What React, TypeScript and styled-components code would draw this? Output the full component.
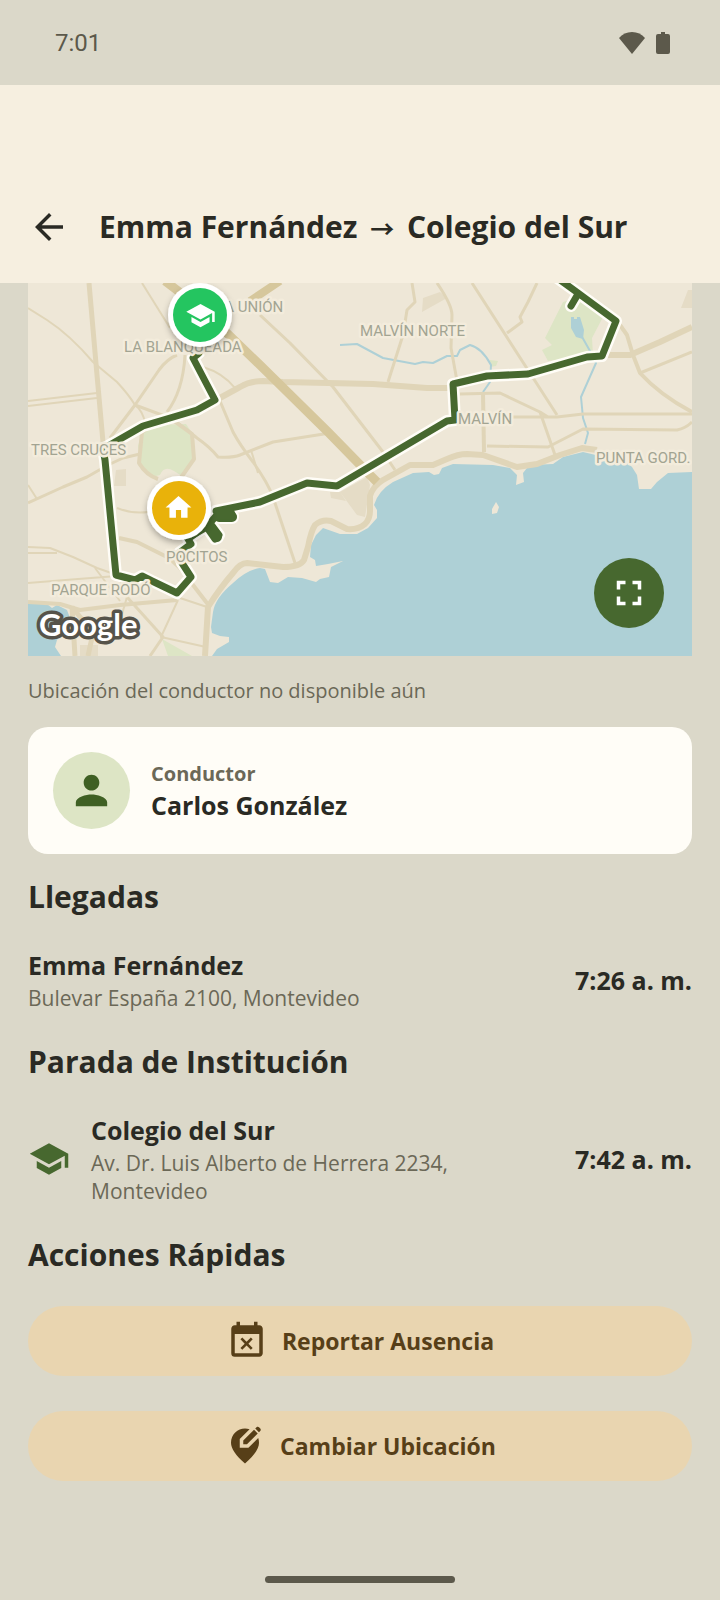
import styled, { createGlobalStyle } from 'styled-components'
import {
  MdArrowBack,
  MdEditLocationAlt,
  MdEventBusy,
  MdFullscreen,
  MdHome,
  MdPerson,
  MdSchool,
} from 'react-icons/md'

const App = () => {
  return (
    <>
      <GlobalStyle />
      <Screen>
        <StatusBar>
          <Clock>7:01</Clock>
          <StatusIcons>
            <svg width='28' height='24' viewBox='0 0 28 24' fill='currentColor'>
              <path d='M14 23L1 7Q6 1 14 1T27 7Z' />
            </svg>
            <svg width='14' height='24' viewBox='0 0 14 24' fill='currentColor'>
              <path d='M5 1H9V3H12Q14 3 14 5V21Q14 23 12 23H2Q0 23 0 21V5Q0 3 2 3H5Z' />
            </svg>
          </StatusIcons>
        </StatusBar>
        <Header>
          <BackButton type='button' aria-label='Volver'>
            <MdArrowBack size={42} />
          </BackButton>
          <HeaderTitle>
            Emma Fernández <Arrow>→</Arrow> Colegio del Sur
          </HeaderTitle>
        </Header>
        <Main>
          <MapWrapper>
            <RouteMap />
            <FullscreenButton type='button' aria-label='Ver mapa completo'>
              <MdFullscreen size={42} />
            </FullscreenButton>
          </MapWrapper>
          <MapCaption>Ubicación del conductor no disponible aún</MapCaption>
          <DriverCard>
            <Avatar>
              <MdPerson size={47} />
            </Avatar>
            <div>
              <DriverLabel>Conductor</DriverLabel>
              <Name>Carlos González</Name>
            </div>
          </DriverCard>
          <Sections>
            <section>
              <SectionTitle>Llegadas</SectionTitle>
              <Stop>
                <StopInfo>
                  <Name>Emma Fernández</Name>
                  <Address>Bulevar España 2100, Montevideo</Address>
                </StopInfo>
                <StopTime>7:26 a. m.</StopTime>
              </Stop>
            </section>
            <section>
              <SectionTitle>Parada de Institución</SectionTitle>
              <Stop>
                <StopIcon size={42} />
                <StopInfo>
                  <Name>Colegio del Sur</Name>
                  <Address>
                    Av. Dr. Luis Alberto de Herrera 2234, Montevideo
                  </Address>
                </StopInfo>
                <StopTime>7:42 a. m.</StopTime>
              </Stop>
            </section>
            <section>
              <SectionTitle>Acciones Rápidas</SectionTitle>
              <Actions>
                <ActionButton type='button'>
                  <MdEventBusy size={42} />
                  Reportar Ausencia
                </ActionButton>
                <ActionButton type='button'>
                  <MdEditLocationAlt size={42} />
                  Cambiar Ubicación
                </ActionButton>
              </Actions>
            </section>
          </Sections>
        </Main>
        <HomeIndicator />
      </Screen>
    </>
  )
}

export default App

const roads = [
  { width: 5, d: 'M61 0L69 92L75 159' },
  { width: 2, d: 'M0 25L19 37Q42 52 65 79L89 99Q101 112 107 122Q115 128 117 140' },
  { width: 2, d: 'M0 118L69 110M0 123L69 115' },
  { width: 2, d: 'M114 0L142 45' },
  { width: 3, d: 'M149 72Q139 76 131 87L107 122L82 155' },
  { width: 3, d: 'M157 72Q155 108 139 129' },
  { width: 2, d: 'M175 84Q195 90 207 105' },
  { width: 6, d: 'M190 116L212 104Q222 98 235 98L255 99L345 101L399 105L425 105' },
  { width: 3, d: 'M107 122L142 135Q155 143 169 155Q182 164 190 174Q205 175 212 172L245 159L302 150' },
  { width: 3, d: 'M192 118L205 149Q212 162 225 179Q240 200 245 214L267 280' },
  { width: 2, d: 'M223 167L230 190' },
  { width: 4, d: 'M127 141L114 149L111 180Q118 192 130 196M142 135L164 151L166 176L152 196' },
  { width: 3, d: 'M0 220L35 204L59 194L80 182L95 175L112 171' },
  { width: 2, d: 'M0 202L9 216' },
  { width: 2, d: 'M89 225Q104 231 120 229' },
  { width: 4, d: 'M91 255L109 259L139 274Q152 282 165 302L182 324' },
  { width: 2, d: 'M0 264L22 265L45 274L69 285L89 292M0 270L29 270' },
  { width: 2, d: 'M0 300L50 296L89 293M67 285L92 318' },
  { width: 4, d: 'M0 319L32 321L52 327L92 322L149 317' },
  { width: 3, d: 'M90 293Q98 306 99 314L135 354L122 373' },
  { width: 2, d: 'M150 317L133 354L178 364M99 314L92 338M152 315L182 325' },
  { width: 5, d: 'M44 324L47 373M44 324L65 350L60 373' },
  {
    width: 6,
    d: 'M177 373L180 324Q192 305 205 290Q212 280 219 280L255 284Q272 284 276 277L280 264Q283 248 287 242Q294 236 303 238L319 246Q330 247 337 241Q342 236 342 228L342 213Q345 203 355 197L382 182L405 182L419 176Q430 171 439 171L455 172L489 184L509 181L532 172L554 165L569 167',
  },
  { width: 3, d: 'M232 32L262 60L305 104L355 169L367 187' },
  { width: 3, d: 'M384 0L387 19L379 27L375 52L360 99' },
  { width: 3, d: 'M409 0Q424 22 424 32L423 65L429 98' },
  { width: 3, d: 'M444 0L529 132M509 0L500 19L492 34L494 39L479 50' },
  { width: 4, d: 'M592 42L599 52L605 72L612 90Q632 112 664 129' },
  { width: 6, d: 'M575 72L602 72L632 59L664 44' },
  { width: 3, d: 'M612 90L664 69' },
  { width: 3, d: 'M432 111L472 110L512 129L520 134M485 134L529 134L555 131L664 131' },
  { width: 3, d: 'M459 163L520 164L555 146L649 147Q658 145 664 139M512 129L527 172' },
  { width: 4, d: 'M455 110L456 169' },
]

const highways = [
  { width: 9, d: 'M137 -2L175 27L232 82L300 149L342 192' },
  { width: 8, d: 'M252 -2L222 18' },
]

const districts = [
  { x: 188, y: 29, name: 'LA UNIÓN' },
  { x: 96, y: 69, name: 'LA BLANQUEADA' },
  { x: 332, y: 53, name: 'MALVÍN NORTE' },
  { x: 430, y: 141, name: 'MALVÍN' },
  { x: 568, y: 180, name: 'PUNTA GORD.' },
  { x: 3, y: 172, name: 'TRES CRUCES' },
  { x: 138, y: 279, name: 'POCITOS' },
  { x: 23, y: 312, name: 'PARQUE RODÓ' },
]

const route =
  'M171 70L165 75L187 117L169 127L115 143L87 159L75 166L77 177L88 292L107 297L114 293L124 298L149 310L163 294L154 280L151 270L163 261L160 256L178 243L187 256L191 252L182 240L188 233L205 233L203 229L188 228L232 219L279 200L309 203L419 138L427 137L425 101L459 93L500 91L559 74L574 73L588 38L550 10L528 -6M550 11L543 23'

// Detours close to the home stop, where the line doubles back on itself
const detours = 'M191 234H204M181 243L189 254M160 253L176 244'

const RouteMap = () => {
  return (
    <MapSvg
      viewBox='0 0 664 373'
      preserveAspectRatio='xMidYMid slice'
      role='img'
      aria-label='Mapa de la ruta'
    >
      <defs>
        <filter id='pin-shadow' x='-30%' y='-30%' width='160%' height='160%'>
          <feDropShadow dx='0' dy='3' stdDeviation='3' floodOpacity='0.3' />
        </filter>
      </defs>
      <rect width='664' height='373' fill='#eee7d7' />
      <g fill='#dde5c5'>
        <path d='M115 145L127 142L158 141L166 153L166 175L154 193L146 188Q136 182 132 192L124 194L112 180L110 163Z' />
        <path d='M535 19L552 14L575 34L564 55L565 72L520 78L514 67L524 62L517 55Z' />
        <path d='M134 356L164 373L140 373ZM462 77L470 78L468 83L462 84Z' />
      </g>
      <g fill='#e5dcc6'>
        <path d='M395 15L412 9L419 15L394 29ZM660 7H664V25H653Z' />
        <path d='M312 209L339 194L342 202L337 234L329 232ZM302 209L312 209L318 218L303 215Z' />
        <path d='M88 187L98 186V203H86ZM52 362H70V373H52Z' />
      </g>
      <g fill='#aed0d6'>
        <path d='M184 373L189 366L201 359L201 354L192 353L184 350L183 344L185 329Q187 315 205 300Q219 287 232 285L237 286L242 299L250 300L260 294L274 295L288 299L292 296L301 294L303 284L315 278L300 281L288 283L287 277L282 274L283 262L288 252L295 245L312 251L329 251L340 245L349 235L349 227L346 222Q350 208 365 199L385 190L401 189L406 192L411 191L414 185L425 181L465 182L482 185L489 192L488 202L496 199L495 190L499 185L504 182L525 181L535 174L555 169L572 173L595 176L604 184L609 192L611 206L623 206L629 199L640 190L664 189V373Z' />
        <path d='M0 320L19 321L24 325L29 322L39 327L42 335L29 357L27 364L33 373H0Z' />
        <path d='M543 34H546V36H549V34H552L556 47L555 56L548 54L543 45Z' />
      </g>
      <path d='M468 219L471 224L469 230L464 231L464 226Z' fill='#eee7d7' />
      <g fill='none' stroke='#aed0d6' strokeWidth='2' strokeLinejoin='round'>
        <path d='M312 62L329 61L355 75L387 81L395 79L405 80L419 73L429 73L432 67L442 62Q454 65 463 82L462 99L455 109' />
        <path d='M553 52L562 68L568 80L553 114L555 135L560 150L557 161' />
      </g>
      <g fill='none' stroke='#e0d5b8' strokeLinejoin='round'>
        {roads.map((road) => (
          <path key={road.d} d={road.d} strokeWidth={road.width} />
        ))}
      </g>
      <g fill='none' stroke='#d6c79c' strokeLinejoin='round'>
        {highways.map((road) => (
          <path key={road.d} d={road.d} strokeWidth={road.width} />
        ))}
        <path d='M339 189L349 199' strokeWidth='9' />
      </g>
      <g fill='none' strokeLinejoin='round' strokeLinecap='round'>
        <path d={detours} stroke='#fffdf7' strokeWidth='14' />
        <path d={route} stroke='#fffdf7' strokeWidth='12' />
        <path d={detours} stroke='#47682f' strokeWidth='10' />
        <path d={route} stroke='#47682f' strokeWidth='7' />
      </g>
      {districts.map((district) => (
        <District key={district.name} x={district.x} y={district.y}>
          {district.name}
        </District>
      ))}
      <g filter='url(#pin-shadow)'>
        <circle cx='172' cy='32' r='32' fill='#ffffff' />
        <circle cx='151' cy='225' r='32' fill='#ffffff' />
      </g>
      <circle cx='172' cy='32' r='27' fill='#24c560' />
      <MdSchool x={157} y={17} size={31} color='#ffffff' />
      <circle cx='151' cy='225' r='27' fill='#e9b20a' />
      <MdHome x={135} y={209} size={31} color='#ffffff' />
      <Attribution x='11' y='353'>
        Google
      </Attribution>
    </MapSvg>
  )
}

const GlobalStyle = createGlobalStyle`
  *,
  *::before,
  *::after {
    box-sizing: border-box;
  }
  body {
    margin: 0;
    background: #dbd8c9;
    color: #2a2a24;
    font-family: 'Open Sans', 'Noto Sans', sans-serif;
  }
  h1, h2, h3, p {
    margin: 0;
  }
  button {
    border: 0;
    font: inherit;
    cursor: pointer;
  }
  svg {
    display: block;
    flex-shrink: 0;
  }
`
const Screen = styled.div`
  min-height: 100vh;
  display: flex;
  flex-direction: column;
`
const StatusBar = styled.div`
  height: 85px;
  padding: 0 50px 0 55px;
  display: flex;
  align-items: center;
  justify-content: space-between;
  color: #5c594b;
`
const Clock = styled.time`
  font-family: Roboto, sans-serif;
  font-size: 24px;
  line-height: 28px;
`
const StatusIcons = styled.div`
  display: flex;
  align-items: center;
  gap: 10px;
`
const Header = styled.header`
  padding: 117px 28px 31px;
  display: flex;
  align-items: center;
  gap: 29px;
  background: #f6efe0;
`
const BackButton = styled.button`
  padding: 4px 0;
  background: none;
  color: #2a2a24;
`
const HeaderTitle = styled.h1`
  font-size: 30px;
  line-height: 40px;
  font-weight: 700;
`
const Arrow = styled.span`
  margin: 0 5px;
  font-family: 'Noto Sans CJK JP', sans-serif;
  font-size: 24px;
`
const Main = styled.main`
  padding: 0 28px;
`
const MapWrapper = styled.div`
  position: relative;
`
const MapSvg = styled.svg`
  width: 100%;
  height: 373px;
`
const District = styled.text`
  font-family: Roboto, sans-serif;
  font-size: 15px;
  fill: #a2a492;
  stroke: #f3ecdc;
  stroke-width: 5px;
  stroke-linejoin: round;
  paint-order: stroke;
`
const Attribution = styled.text`
  font-family: Lato, sans-serif;
  font-size: 31px;
  font-weight: 700;
  fill: #ffffff;
  stroke: #56534a;
  stroke-width: 7px;
  stroke-linejoin: round;
  paint-order: stroke;
`
const FullscreenButton = styled.button`
  position: absolute;
  right: 28px;
  bottom: 28px;
  width: 70px;
  height: 70px;
  padding: 0;
  display: grid;
  place-items: center;
  border-radius: 50%;
  background: #47682f;
  color: #ffffff;
`
const MapCaption = styled.p`
  margin: 20px 0 21px;
  font-size: 20px;
  line-height: 30px;
  font-weight: 500;
  color: #6b6857;
`
const DriverCard = styled.article`
  padding: 25px;
  display: flex;
  align-items: center;
  gap: 21px;
  border-radius: 20px;
  background: #fffdf7;
`
const Avatar = styled.div`
  width: 77px;
  height: 77px;
  display: grid;
  place-items: center;
  border-radius: 50%;
  background: #dde5c5;
  color: #3f6024;
`
const DriverLabel = styled.p`
  font-size: 20px;
  line-height: 28px;
  font-weight: 700;
  color: #6b6857;
`
const Name = styled.h3`
  font-size: 25px;
  line-height: 34px;
  font-weight: 700;
`
const Sections = styled.div`
  margin-top: 23px;
  display: flex;
  flex-direction: column;
  gap: 30px;
`
const SectionTitle = styled.h2`
  margin-bottom: 31px;
  font-size: 30px;
  line-height: 40px;
  font-weight: 700;
`
const Stop = styled.div`
  display: flex;
  align-items: center;
  gap: 21px;
`
const StopIcon = styled(MdSchool)`
  color: #47682f;
`
const StopInfo = styled.div`
  flex: 1;
`
const Address = styled.p`
  padding-top: 2px;
  font-size: 21px;
  line-height: 28px;
  color: #6b6857;
`
const StopTime = styled.time`
  font-size: 25px;
  line-height: 34px;
  font-weight: 700;
  white-space: nowrap;
`
const Actions = styled.div`
  display: flex;
  flex-direction: column;
  gap: 35px;
`
const ActionButton = styled.button`
  height: 70px;
  padding: 0 28px;
  display: flex;
  align-items: center;
  justify-content: center;
  gap: 14px;
  border-radius: 35px;
  background: #e9d5b0;
  color: #573f18;
  font-size: 23px;
  font-weight: 700;
`
const HomeIndicator = styled.div`
  width: 190px;
  height: 7px;
  margin: auto auto 17px;
  border-radius: 4px;
  background: #5c594b;
`
